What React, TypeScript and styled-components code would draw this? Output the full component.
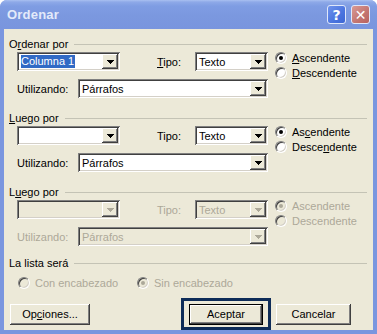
import React, { FC } from 'react';
import styled, { createGlobalStyle } from 'styled-components';

const GlobalStyle = createGlobalStyle`
  html, body {
    margin: 0;
    padding: 0;
    background: #ffffff;
  }
  body {
    font-family: 'Liberation Sans', Arial, sans-serif;
    font-size: 11px;
    color: #000000;
  }
`;

const disabledText = '#aca899';
const face = '#ece9d8';

const Window = styled.div`
  width: 377px;
  height: 334px;
  box-sizing: border-box;
  display: flex;
  flex-direction: column;
  background: #7a96df;
  border-radius: 7px 7px 0 0;
  overflow: hidden;
`;

const TitleBar = styled.div`
  height: 29px;
  flex: none;
  display: flex;
  align-items: center;
  padding: 0 7px 0 7px;
  background: linear-gradient(#a9c0f1 0, #8ea9e8 2px, #7f9de3 6px, #7b98df 55%, #7995de 100%);
`;

const Title = styled.span`
  flex: 1;
  font-weight: bold;
  font-size: 13px;
  color: #e3eafa;
  letter-spacing: 0.2px;
`;

const CaptionButton = styled.div<{ $tone: 'help' | 'close' }>`
  width: 19px;
  height: 19px;
  box-sizing: border-box;
  margin-left: 5px;
  border: 1px solid #dfe7fa;
  border-radius: 3px;
  display: flex;
  align-items: center;
  justify-content: center;
  color: #ffffff;
  font-family: 'DejaVu Sans', sans-serif;
  font-weight: bold;
  font-size: 14px;
  background: ${(p) =>
    p.$tone === 'help'
      ? 'linear-gradient(135deg, #6f93ec 0%, #4a74df 60%, #3d66d4 100%)'
      : 'linear-gradient(135deg, #d99a94 0%, #c37470 60%, #b8625f 100%)'};
`;

const Body = styled.div`
  flex: 1;
  margin: 0 4px 4px;
  padding: 9px 6px 0 5px;
  background: ${face};
  display: flex;
  flex-direction: column;
`;

const Group = styled.section<{ $top: number }>`
  margin-top: ${(p) => p.$top}px;
`;

const GroupHead = styled.div`
  display: flex;
  align-items: center;
  height: 13px;
  line-height: 13px;
  white-space: nowrap;
  &::after {
    content: '';
    flex: 1;
    margin-left: 6px;
    border-top: 1px solid #c4c3b5;
  }
`;

const GroupBody = styled.div`
  display: flex;
  padding-left: 8px;
  margin-top: 1px;
`;

const Fields = styled.div`
  width: 251px;
  display: flex;
  flex-direction: column;
  gap: 8px;
`;

const Row = styled.div`
  height: 19px;
  display: flex;
  align-items: center;
`;

const Label = styled.span<{ $w: number; $ml?: number; $off?: boolean }>`
  width: ${(p) => p.$w}px;
  margin-left: ${(p) => p.$ml || 0}px;
  flex: none;
  color: ${(p) => (p.$off ? disabledText : '#000')};
  white-space: nowrap;
`;

const Key = styled.u`
  text-decoration: underline;
  text-underline-offset: 1px;
`;

const ComboBox = styled.div<{ $w: number; $off?: boolean }>`
  width: ${(p) => p.$w}px;
  height: 19px;
  flex: none;
  box-sizing: border-box;
  padding: 2px;
  display: flex;
  background: ${(p) => (p.$off ? face : '#ffffff')};
  box-shadow: inset 1px 1px #808080, inset -1px -1px #ffffff,
    inset 2px 2px #404040, inset -2px -2px #d4d0c8;
`;

const ComboText = styled.div<{ $off?: boolean }>`
  flex: 1;
  display: flex;
  align-items: center;
  padding-left: 2px;
  overflow: hidden;
  white-space: nowrap;
  color: ${(p) => (p.$off ? disabledText : '#000')};
`;

const Selected = styled.span`
  background: #316ac5;
  color: #ffffff;
  line-height: 13px;
  padding: 0 1px 0 0;
`;

const DropButton = styled.div`
  width: 16px;
  flex: none;
  display: flex;
  align-items: center;
  justify-content: center;
  background: ${face};
  box-shadow: inset -1px -1px #404040, inset 1px 1px #ffffff,
    inset -2px -2px #808080;
`;

const Radios = styled.div<{ $row?: boolean }>`
  display: flex;
  flex-direction: ${(p) => (p.$row ? 'row' : 'column')};
  margin-left: ${(p) => (p.$row ? 9 : 7)}px;
  margin-top: ${(p) => (p.$row ? 5 : -2)}px;
`;

const RadioItem = styled.div<{ $w?: number; $off?: boolean }>`
  height: 15px;
  width: ${(p) => (p.$w ? `${p.$w}px` : 'auto')};
  display: flex;
  align-items: center;
  gap: 5px;
  white-space: nowrap;
  color: ${(p) => (p.$off ? disabledText : '#000')};
`;

const RadioCircle = styled.span<{ $checked?: boolean; $off?: boolean }>`
  width: 12px;
  height: 12px;
  flex: none;
  box-sizing: border-box;
  border-radius: 50%;
  border: 1px solid;
  border-color: #808080 #ffffff #ffffff #808080;
  background: ${(p) => (p.$off ? face : '#ffffff')};
  box-shadow: inset 1px 1px #404040, inset -1px -1px #d4d0c8;
  display: flex;
  align-items: center;
  justify-content: center;
  &::after {
    content: '';
    display: ${(p) => (p.$checked ? 'block' : 'none')};
    width: 4px;
    height: 4px;
    border-radius: 50%;
    background: ${(p) => (p.$off ? disabledText : '#000')};
  }
`;

const ButtonRow = styled.div`
  height: 32px;
  margin-top: 8px;
  display: flex;
  align-items: center;
`;

const Button = styled.div<{ $w: number; $ml: number; $default?: boolean }>`
  width: ${(p) => p.$w}px;
  height: 21px;
  margin-left: ${(p) => p.$ml}px;
  box-sizing: border-box;
  display: flex;
  align-items: center;
  justify-content: center;
  background: ${face};
  border: ${(p) => (p.$default ? '1px solid #000' : 'none')};
  box-shadow: inset -1px -1px #404040, inset 1px 1px #ffffff,
    inset -2px -2px #808080;
`;

const FocusFrame = styled.div`
  width: 90px;
  height: 32px;
  margin-left: 91px;
  box-sizing: border-box;
  border: 3px solid #0e2c58;
  display: flex;
  align-items: center;
  justify-content: center;
`;

const Arrow: FC<{ off?: boolean }> = ({ off }) => (
  <svg width="7" height="4" viewBox="0 0 7 4" shapeRendering="crispEdges">
    <g fill={off ? disabledText : '#000'}>
      <rect x="0" y="0" width="7" height="1" />
      <rect x="1" y="1" width="5" height="1" />
      <rect x="2" y="2" width="3" height="1" />
      <rect x="3" y="3" width="1" height="1" />
    </g>
  </svg>
);

const Combo: FC<{ w: number; off?: boolean; children?: React.ReactNode }> = ({
  w,
  off,
  children,
}) => (
  <ComboBox $w={w} $off={off}>
    <ComboText $off={off}>{children}</ComboText>
    <DropButton>
      <Arrow off={off} />
    </DropButton>
  </ComboBox>
);

const Radio: FC<{
  checked?: boolean;
  off?: boolean;
  w?: number;
  children: React.ReactNode;
}> = ({ checked, off, w, children }) => (
  <RadioItem $w={w} $off={off}>
    <RadioCircle $checked={checked} $off={off} />
    <span>{children}</span>
  </RadioItem>
);

type SortGroup = {
  title: React.ReactNode;
  top: number;
  column?: React.ReactNode;
  tipo: React.ReactNode;
  asc: React.ReactNode;
  desc: React.ReactNode;
  off?: boolean;
};

const groups: SortGroup[] = [
  {
    title: (
      <>
        O<Key>r</Key>denar por
      </>
    ),
    top: 0,
    column: <Selected>Columna 1</Selected>,
    tipo: (
      <>
        <Key>T</Key>ipo:
      </>
    ),
    asc: (
      <>
        <Key>A</Key>scendente
      </>
    ),
    desc: (
      <>
        <Key>D</Key>escendente
      </>
    ),
  },
  {
    title: (
      <>
        <Key>L</Key>uego por
      </>
    ),
    top: 14,
    tipo: 'Tipo:',
    asc: (
      <>
        As<Key>c</Key>endente
      </>
    ),
    desc: (
      <>
        Desce<Key>n</Key>dente
      </>
    ),
  },
  {
    title: (
      <>
        L<Key>u</Key>ego por
      </>
    ),
    top: 14,
    tipo: 'Tipo:',
    asc: 'Ascendente',
    desc: 'Descendente',
    off: true,
  },
];

const App: FC = () => (
  <>
    <GlobalStyle />
    <Window>
      <TitleBar>
        <Title>Ordenar</Title>
        <CaptionButton $tone="help">?</CaptionButton>
        <CaptionButton $tone="close">✕</CaptionButton>
      </TitleBar>
      <Body>
        {groups.map((g, i) => (
          <Group key={i} $top={g.top}>
            <GroupHead>{g.title}</GroupHead>
            <GroupBody>
              <Fields>
                <Row>
                  <Combo w={103} off={g.off}>
                    {g.column}
                  </Combo>
                  <Label $w={38} $ml={37} $off={g.off}>
                    {g.tipo}
                  </Label>
                  <Combo w={73} off={g.off}>
                    Texto
                  </Combo>
                </Row>
                <Row>
                  <Label $w={61} $off={g.off}>
                    Utilizando:
                  </Label>
                  <Combo w={190} off={g.off}>
                    Párrafos
                  </Combo>
                </Row>
              </Fields>
              <Radios>
                <Radio checked off={g.off}>
                  {g.asc}
                </Radio>
                <Radio off={g.off}>{g.desc}</Radio>
              </Radios>
            </GroupBody>
          </Group>
        ))}
        <Group $top={11}>
          <GroupHead>La lista será</GroupHead>
          <Radios $row>
            <Radio off w={119}>
              Con encabezado
            </Radio>
            <Radio checked off>
              Sin encabezado
            </Radio>
          </Radios>
        </Group>
        <ButtonRow>
          <Button $w={80} $ml={1}>
            <span>
              Op<Key>c</Key>iones...
            </span>
          </Button>
          <FocusFrame>
            <Button $w={74} $ml={0} $default>
              Aceptar
            </Button>
          </FocusFrame>
          <Button $w={75} $ml={5}>
            Cancelar
          </Button>
        </ButtonRow>
      </Body>
    </Window>
  </>
);

export default App;
